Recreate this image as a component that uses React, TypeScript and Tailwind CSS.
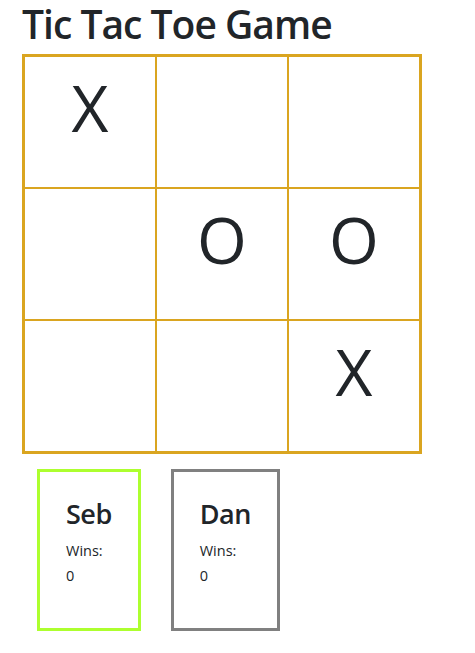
const board = ["X", "", "", "", "O", "O", "", "", "X"];

const players = [
  { name: "Seb", wins: 0, border: "border-[#adff2f]" },
  { name: "Dan", wins: 0, border: "border-[#808080]" },
];

export default function App() {
  return (
    <div className="pl-[22px] text-[#212529] font-['Open_Sans','Liberation_Sans',sans-serif]">
      <h1 className="text-[39px] font-semibold tracking-[-1px] leading-[48px] mb-[6px]">Tic Tac Toe Game</h1>

      {/* Board */}
      <div className="w-[400px] h-[400px] border-2 border-[#daa520] grid grid-cols-3 grid-rows-3">
        {board.map((cell, i) => (
          <div key={i} className="border border-[#daa520] text-center text-[64px] leading-[1.5] pt-[3px]">
            {cell}
          </div>
        ))}
      </div>

      {/* Scores */}
      <div className="flex">
        {players.map((p) => (
          <div key={p.name} className={`m-[15px] border-[3px] ${p.border} pt-[25px] pb-6 px-[26px]`}>
            <h3 className="text-[27px] font-semibold tracking-[-0.5px] leading-[33px] mb-2">{p.name}</h3>
            <p className="mb-4 leading-6">
              <small className="text-[14.5px]">
                Wins:
                <br />
                {p.wins}
              </small>
            </p>
          </div>
        ))}
      </div>
    </div>
  );
}
